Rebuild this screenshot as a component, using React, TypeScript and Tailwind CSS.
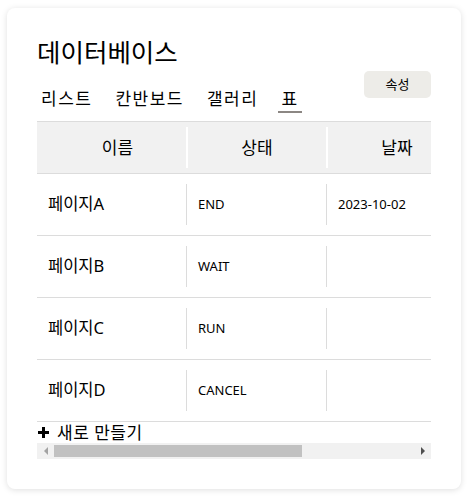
const font = { fontFamily: '"Noto Sans", "Noto Sans CJK KR", sans-serif' }

const rows = [
  { name: '페이지A', status: 'END', date: '2023-10-02' },
  { name: '페이지B', status: 'WAIT', date: '' },
  { name: '페이지C', status: 'RUN', date: '' },
  { name: '페이지D', status: 'CANCEL', date: '' },
]

const tabs = ['리스트', '칸반보드', '갤러리', '표']

function PlusIcon() {
  return (
    <svg width="11" height="11" viewBox="0 0 11 11" aria-hidden="true">
      <rect x="4" y="0" width="3" height="11" fill="#000" />
      <rect x="0" y="4" width="11" height="3" fill="#000" />
    </svg>
  )
}

// drawn scrollbar, the headless browser hides native ones
function ScrollBar() {
  return (
    <div className="flex h-[16px] items-center bg-[#f1f1f1]">
      <div className="flex w-[17px] justify-center">
        <svg width="4" height="8" viewBox="0 0 4 8" aria-hidden="true">
          <path d="M4 0 L0 4 L4 8 Z" fill="#a3a3a3" />
        </svg>
      </div>
      <div className="flex flex-1 items-center">
        <div className="h-[12px] w-[248px] bg-[#c1c1c1]" />
      </div>
      <div className="flex w-[17px] justify-center">
        <svg width="4" height="8" viewBox="0 0 4 8" aria-hidden="true">
          <path d="M0 0 L4 4 L0 8 Z" fill="#505050" />
        </svg>
      </div>
    </div>
  )
}

export default function App() {
  return (
    <div className="min-h-screen bg-white px-[7px] pt-[8px]" style={font}>
      <div className="w-[454px] h-[481px] rounded-lg bg-white px-[30px] pt-[26px] shadow-[0_1px_6px_rgba(0,0,0,0.13)] text-black">
        <h1 className="text-[25.5px] leading-[36px] font-normal">데이터베이스</h1>

        <div className="mt-px flex items-end justify-between">
          <div className="ml-[1px] flex gap-[17px]">
            {tabs.map((t, i) => (
              <div
                key={t}
                className={
                  i === tabs.length - 1
                    ? 'px-[3px] text-[17px] leading-[24px] tracking-[1.5px] border-b-2 border-[#8c8783]'
                    : 'px-[3px] text-[17px] leading-[24px] tracking-[1.5px] border-b-2 border-transparent'
                }
              >
                {t}
              </div>
            ))}
          </div>
          <button className="mb-[15px] h-[27px] w-[67px] rounded-[5px] bg-[#edece8] text-[13px]">
            속성
          </button>
        </div>

        <div className="mt-[8px] overflow-hidden">
          <div className="w-[575px]">
            <div className="flex h-[53px] border-y border-[#dcdcdc] bg-[#f1f1f1] text-[17px]">
              <div className="flex w-[149px] items-center justify-center pl-3">이름</div>
              <div className="flex w-[140px] py-[5px]">
                <div className="flex flex-1 items-center justify-center border-l-2 border-white">상태</div>
              </div>
              <div className="flex w-[140px] py-[5px]">
                <div className="flex flex-1 items-center justify-center border-l-2 border-white">날짜</div>
              </div>
              <div className="flex w-[146px] py-[5px]">
                <div className="flex flex-1 border-l-2 border-white" />
              </div>
            </div>
            {rows.map((r) => (
              <div key={r.name} className="flex h-[62px] border-b border-[#dcdcdc]">
                <div className="flex w-[149px] items-center pl-[11px] text-[16.5px]">{r.name}</div>
                <div className="flex w-[140px] py-[10px]">
                  <div className="flex flex-1 items-center border-l border-[#dcdcdc] pl-[11px] text-[13px]">
                    {r.status}
                  </div>
                </div>
                <div className="flex w-[140px] py-[10px]">
                  <div className="flex flex-1 items-center border-l border-[#dcdcdc] pl-[11px] text-[13px]">
                    {r.date}
                  </div>
                </div>
                <div className="flex w-[146px] py-[10px]">
                  <div className="flex flex-1 border-l border-[#dcdcdc]" />
                </div>
              </div>
            ))}
            <div className="flex h-[21px] items-center gap-[8px] pl-[1px] text-[17px] leading-[20px] tracking-[0.5px]">
              <PlusIcon />
              <span>새로 만들기</span>
            </div>
          </div>
        </div>
        <ScrollBar />
      </div>
    </div>
  )
}
